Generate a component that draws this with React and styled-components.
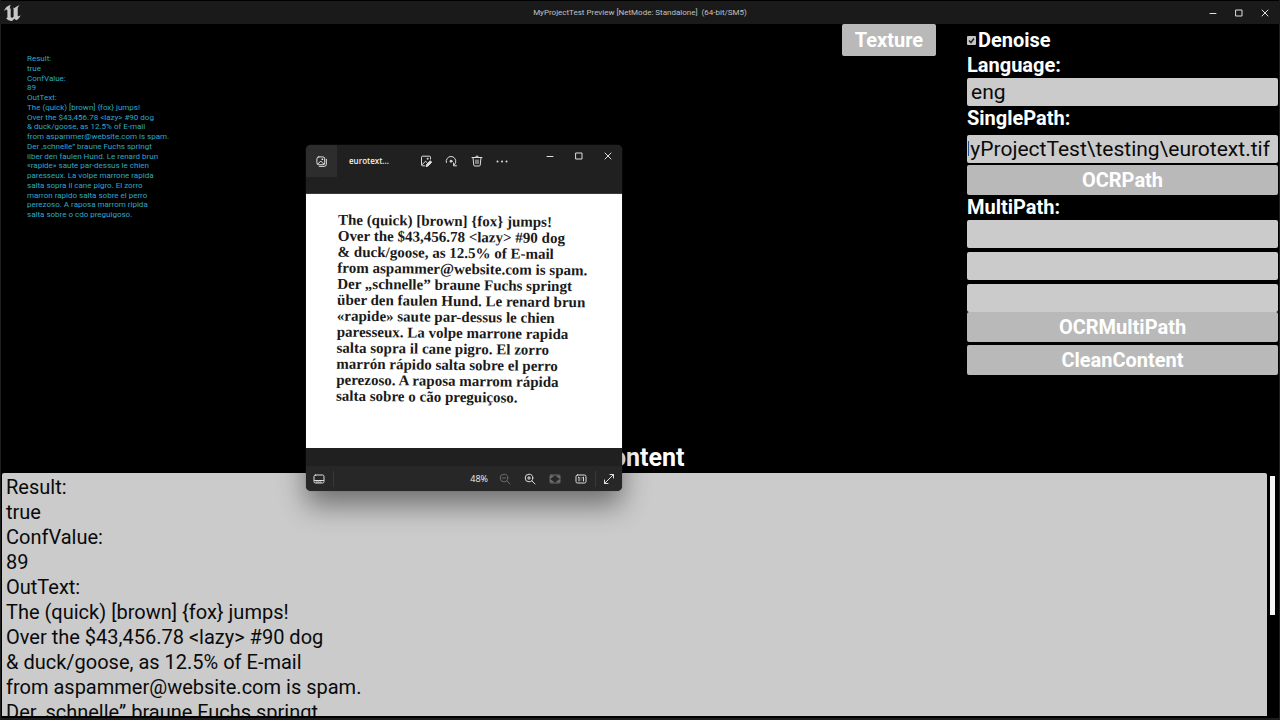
import React, { useEffect, useRef } from "react";
import styled, { createGlobalStyle } from "styled-components";

const GlobalStyle = createGlobalStyle`
  * {
    box-sizing: border-box;
  }
  body {
    margin: 0;
    background: #000000;
    overflow: hidden;
  }
  button,
  input,
  textarea {
    margin: 0;
    padding: 0;
    border: 0;
    outline: 0;
    font-family: inherit;
  }
`;

const GameWindow = styled.div`
  position: relative;
  display: flex;
  flex-direction: column;
  height: 100vh;
  padding: 1px 2px 4px;
  background: #000000;
  color: #ffffff;
  font-family: Roboto, sans-serif;
  box-shadow: inset 1px 0 #1f1f1f, inset -1px 0 #1f1f1f, inset 0 -2px #1c1c1c;
`;

const TitleBar = styled.header`
  flex: none;
  display: grid;
  grid-template-columns: 1fr auto 1fr;
  align-items: center;
  height: 23px;
  margin: 0 -2px;
  padding: 0 2px;
  background: #1a1a1a;
`;

const Logo = styled.svg`
  display: block;
  margin-left: 2px;
  fill: #c8c8c8;
`;

const TitleText = styled.h1`
  margin: 0;
  font-size: 8px;
  font-weight: 400;
  line-height: 12px;
  white-space: pre;
  color: #c0c0c0;
`;

const Controls = styled.div`
  display: flex;
  justify-content: flex-end;
`;

const IconButton = styled.button`
  display: flex;
  align-items: center;
  justify-content: center;
  width: ${(p) => p.$width}px;
  height: 22px;
  background: transparent;
  color: ${(p) => (p.$dim ? "#6c6c6c" : "#dedede")};
`;

const Icon = styled.svg`
  display: block;
  fill: none;
  stroke: currentColor;
  stroke-width: 1;
  stroke-linecap: round;
  stroke-linejoin: round;
`;

const Viewport = styled.main`
  flex: none;
  display: grid;
  grid-template-columns: 1fr auto 311px;
  column-gap: 31px;
  align-items: start;
  min-height: 418px;
`;

const DebugText = styled.div`
  display: grid;
  grid-auto-rows: 1fr;
  height: 166px;
  margin: 30px 0 0 25px;
  font-size: 8px;
  line-height: 9px;
  color: #2fa8c8;
`;

const SidePanel = styled.form`
  display: flex;
  flex-direction: column;
  padding-top: 4px;
`;

const PanelLabel = styled.label`
  display: flex;
  align-items: center;
  height: 25px;
  font-size: 20px;
  font-weight: 700;
  line-height: 25px;
`;

const CheckBox = styled.input`
  appearance: none;
  width: 9px;
  height: 9px;
  margin-right: 2px !important;
  border-radius: 1px;
  background: #c4c4c4
    url("data:image/svg+xml,%3Csvg xmlns='http://www.w3.org/2000/svg' viewBox='0 0 9 9'%3E%3Cpath d='M2 4.5L4 6.5L7 2.5' fill='none' stroke='%23222' stroke-width='1.5'/%3E%3C/svg%3E");
`;

const TextInput = styled.input`
  width: 100%;
  height: 28px;
  padding: 0 8px 0 1px !important;
  border-radius: 2px;
  background: #cbcbcb;
  color: #0a0a0a;
  font-size: 21px;
  line-height: 25px;
  text-indent: 3px;
`;

const Stack = styled.div`
  display: flex;
  flex-direction: column;
  gap: ${(p) => p.$gap}px;
  padding-top: ${(p) => p.$top || 0}px;
`;

const PanelButton = styled.button`
  height: 30px;
  border-radius: 2px;
  background: #b9b9b9;
  color: #ffffff;
  font-size: 20px;
  font-weight: 700;
  line-height: 25px;
`;

const TextureButton = styled(PanelButton)`
  width: 94px;
  height: 32px;
`;

const ContentTitle = styled.h2`
  flex: none;
  margin: 0;
  height: 31px;
  font-size: 25px;
  font-weight: 700;
  line-height: 32px;
  text-align: center;
`;

const OutputRow = styled.div`
  flex: 1;
  display: flex;
  min-height: 0;
  gap: 3px;
`;

const Output = styled.textarea`
  flex: 1;
  padding: 2px 4px 0 !important;
  border-radius: 2px 2px 0 0;
  background: #cbcbcb;
  color: #0a0a0a;
  font-size: 20px;
  line-height: 25px;
  white-space: pre;
  overflow: hidden;
  resize: none;
`;

const ScrollTrack = styled.div`
  width: 8px;
  padding-top: 3px;
`;

const ScrollThumb = styled.div`
  width: 5px;
  height: 58%;
  background: #f5f5f5;
`;

const PhotoWindow = styled.section`
  position: absolute;
  left: 306px;
  top: 145px;
  width: 316px;
  border-radius: 5px;
  overflow: hidden;
  background: #202020;
  color: #f0f0f0;
  font-family: "Open Sans", sans-serif;
  box-shadow: 0 0 1px #555555, 0 14px 28px rgba(0, 0, 0, 0.45);
`;

const PhotoHeader = styled.div`
  display: flex;
  align-items: flex-start;
  height: 49px;
  border-bottom: 1px solid #3a3a3a;
`;

const PhotoTab = styled.div`
  display: flex;
  align-items: center;
  justify-content: center;
  width: 31px;
  height: 32px;
  background: #2d2d2d;
`;

const FileName = styled.div`
  width: 76px;
  padding-left: 12px;
  font-size: 8px;
  font-weight: 600;
  line-height: 32px;
`;

const PhotoTools = styled.div`
  display: flex;
  flex: 1;
  padding-top: 5px;
`;

const Page = styled.div`
  height: 254px;
  padding: 19px 0 0 31px;
  background: #ffffff;
`;

const Scan = styled.div`
  width: max-content;
  color: #1a1a1a;
  font-family: "Liberation Serif", serif;
  font-size: 15px;
  font-weight: 700;
  line-height: 16px;
  white-space: pre;
  transform: rotate(0.6deg);
`;

const PhotoFooter = styled.div`
  display: flex;
  align-items: center;
  height: 25px;
  margin-top: 18px;
  background: #272727;
`;

const Divider = styled.div`
  width: 1px;
  height: 16px;
  margin-left: 2px;
  background: #383838;
`;

const Zoom = styled.div`
  flex: 1;
  padding-right: 4px;
  font-size: 9px;
  line-height: 12px;
  text-align: right;
`;

const outText = [
  "Result:",
  "true",
  "ConfValue:",
  "89",
  "OutText:",
  "The (quick) [brown] {fox} jumps!",
  "Over the $43,456.78 <lazy> #90 dog",
  "& duck/goose, as 12.5% of E-mail",
  "from aspammer@website.com is spam.",
  "Der ,schnelle” braune Fuchs springt",
  "iiber den faulen Hund. Le renard brun",
  "«rapide» saute par-dessus le chien",
  "paresseux. La volpe marrone rapida",
  "salta sopra il cane pigro. El zorro",
  "marron rapido salta sobre el perro",
  "perezoso. A raposa marrom ripida",
  "salta sobre o cdo preguigoso.",
];

const scanText = `The (quick) [brown] {fox} jumps!
Over the $43,456.78 <lazy> #90 dog
& duck/goose, as 12.5% of E-mail
from aspammer@website.com is spam.
Der „schnelle” braune Fuchs springt
über den faulen Hund. Le renard brun
«rapide» saute par-dessus le chien
paresseux. La volpe marrone rapida
salta sopra il cane pigro. El zorro
marrón rápido salta sobre el perro
perezoso. A raposa marrom rápida
salta sobre o cão preguiçoso.`;

const UnrealLogo = () => (
  <Logo width="17" height="18" viewBox="1 1 14 14.5">
    <path d="M6.5 1.5C4 2.2 1.6 4 1 7c1-1.2 1.800-1.700 2.300-1.500.4.100.5.500.5 1v5c0 .7-.5.900-1.200.800C3.700 14 5.600 14.800 7.700 14.800L9.400 13l1.700 1.300c1.700-1 3-2.600 3.600-4.500-.8.800-1.500 1.200-2 1.100-.300-.1-.4-.4-.4-.9V4.500c0-1 .8-2 1.700-2.700-1.800.4-3.400 1.300-4.400 2.500-.5-.5-1-.600-1.500-.600.500.400.8.900.8 1.600v6c-.4.500-.9.900-1.400.900-.7 0-1-.5-1-1.200V4.300c-.3.100-.6.300-.800.500.1-1.200.4-2.300.8-3.300z" />
  </Logo>
);

const icons = {
  min: <path d="M3 6.500h6" />,
  max: <rect x="3" y="3" width="6" height="6" />,
  close: <path d="M3 3l6 6M9 3l-6 6" />,
  gallery: (
    <>
      <rect x="1" y="1" width="8.500" height="8.500" rx="2" />
      <path d="M3.500 11.300H9A2.300 2.300 0 0 0 11.300 9V3.500M2 8.800l3.200-3.300 3.300 3.300" />
      <circle cx="6.800" cy="3.500" r=".5" />
    </>
  ),
  edit: (
    <>
      <path d="M10.500 4V2.200a1 1 0 0 0-1-1h-7a1 1 0 0 0-1 1v7.600a1 1 0 0 0 1 1h2M2 9.800l3.500-3.600L7 7.600" />
      <circle cx="7.500" cy="3.800" r=".5" />
      <path
        d="M6.200 11.300l.5-2 3.600-3.500 1.400 1.400-3.500 3.600z"
        fill="currentColor"
      />
    </>
  ),
  rotate: (
    <>
      <path d="M1.300 7.500A4.800 4.800 0 1 1 10.600 7.500c-.2 1-.7 1.900-1.500 2.700M8.600 7.900v2.900h2.900" />
      <circle cx="6" cy="6.200" r="1" fill="currentColor" />
    </>
  ),
  trash: (
    <path d="M1 2.500h10M4.500 2.500a1.500 1.500 0 0 1 3 0M2 2.500l.8 7.700a1 1 0 0 0 1 .8h4.400a1 1 0 0 0 1-.8l.8-7.700M5 5v3.500M7 5v3.500" />
  ),
  more: <path d="M1.500 6.500h.01M6 6.500h.01M10.500 6.500h.01" strokeWidth="2" />,
  film: (
    <>
      <rect x="1" y="2" width="10" height="8" rx="1.500" />
      <path d="M1.500 7.500h9" />
      <path d="M3 9h6" strokeDasharray="1 1" />
    </>
  ),
  zoomOut: (
    <>
      <circle cx="5" cy="5" r="3.800" />
      <path d="M8 8l3 3M3.500 5h3" />
    </>
  ),
  zoomIn: (
    <>
      <circle cx="5" cy="5" r="3.800" />
      <path d="M8 8l3 3M3.500 5h3M5 3.500v3" />
    </>
  ),
  fit: (
    <>
      <rect x="1" y="2" width="10" height="8" rx="1" />
      <path
        d="M2 3h2.500L2 5zM10 3H7.500L10 5zM2 9h2.500L2 7zM10 9H7.500L10 7z"
        fill="currentColor"
      />
    </>
  ),
  actual: (
    <>
      <rect x="1" y="2" width="10" height="8" rx="1.500" />
      <path d="M3.300 4.500l.7-.5v4M7.800 4.500l.7-.5v4M6 5v.01M6 7v.01" />
    </>
  ),
  expand: <path d="M1.500 10.500l9-9M7 1.500h3.500V5M1.500 7v3.500H5" />,
};

const Tool = ({ name, label, width = 25, size = 12, dim }) => (
  <IconButton type="button" aria-label={label} $width={width} $dim={dim}>
    <Icon width={size} height={size} viewBox="0 0 12 12">
      {icons[name]}
    </Icon>
  </IconButton>
);

const PhotoViewer = () => (
  <PhotoWindow>
    <PhotoHeader>
      <PhotoTab>
        <Icon width="11" height="11" viewBox="0 0 12 12">
          {icons.gallery}
        </Icon>
      </PhotoTab>
      <FileName>eurotext...</FileName>
      <PhotoTools>
        <Tool name="edit" label="Edit" />
        <Tool name="rotate" label="Rotate" width={26} />
        <Tool name="trash" label="Delete" />
        <Tool name="more" label="More" />
      </PhotoTools>
      <Controls>
        <Tool name="min" label="Minimize" width={29} />
        <Tool name="max" label="Maximize" width={29} />
        <Tool name="close" label="Close" width={29} />
      </Controls>
    </PhotoHeader>
    <Page>
      <Scan>{scanText}</Scan>
    </Page>
    <PhotoFooter>
      <Tool name="film" label="Filmstrip" />
      <Divider />
      <Zoom>48%</Zoom>
      <Tool name="zoomOut" label="Zoom out" dim />
      <Tool name="zoomIn" label="Zoom in" />
      <Tool name="fit" label="Fit" width={26} dim />
      <Tool name="actual" label="Actual size" />
      <Divider />
      <Tool name="expand" label="Full screen" width={26} />
    </PhotoFooter>
  </PhotoWindow>
);

const App = () => {
  const path = useRef(null);

  // keep the end of a long path in view
  useEffect(() => {
    path.current.scrollLeft = path.current.scrollWidth;
  }, []);

  return (
    <>
      <GlobalStyle />
      <GameWindow>
        <TitleBar>
          <UnrealLogo />
          <TitleText>
            {"MyProjectTest Preview [NetMode: Standalone]  (64-bit/SM5)"}
          </TitleText>
          <Controls>
            <Tool name="min" label="Minimize" width={26} />
            <Tool name="max" label="Maximize" width={26} />
            <Tool name="close" label="Close" width={26} />
          </Controls>
        </TitleBar>
        <Viewport>
          <DebugText>
            {outText.map((line) => (
              <span key={line}>{line}</span>
            ))}
          </DebugText>
          <TextureButton type="button">Texture</TextureButton>
          <SidePanel>
            <PanelLabel>
              <CheckBox type="checkbox" defaultChecked />
              Denoise
            </PanelLabel>
            <PanelLabel htmlFor="language">Language:</PanelLabel>
            <TextInput id="language" defaultValue="eng" />
            <PanelLabel htmlFor="single">SinglePath:</PanelLabel>
            <Stack $gap={2} $top={4}>
              <TextInput
                id="single"
                ref={path}
                defaultValue="MyProjectTest\testing\eurotext.tif"
              />
              <PanelButton type="button">OCRPath</PanelButton>
            </Stack>
            <PanelLabel htmlFor="multi1">MultiPath:</PanelLabel>
            <Stack $gap={4}>
              <TextInput id="multi1" />
              <TextInput aria-label="MultiPath 2" />
              <TextInput aria-label="MultiPath 3" />
            </Stack>
            <Stack $gap={3}>
              <PanelButton type="button">OCRMultiPath</PanelButton>
              <PanelButton type="button">CleanContent</PanelButton>
            </Stack>
          </SidePanel>
        </Viewport>
        <ContentTitle>Content</ContentTitle>
        <OutputRow>
          <Output
            aria-label="Content"
            spellCheck={false}
            defaultValue={outText.join("\n")}
          />
          <ScrollTrack>
            <ScrollThumb />
          </ScrollTrack>
        </OutputRow>
        <PhotoViewer />
      </GameWindow>
    </>
  );
};

export default App;
